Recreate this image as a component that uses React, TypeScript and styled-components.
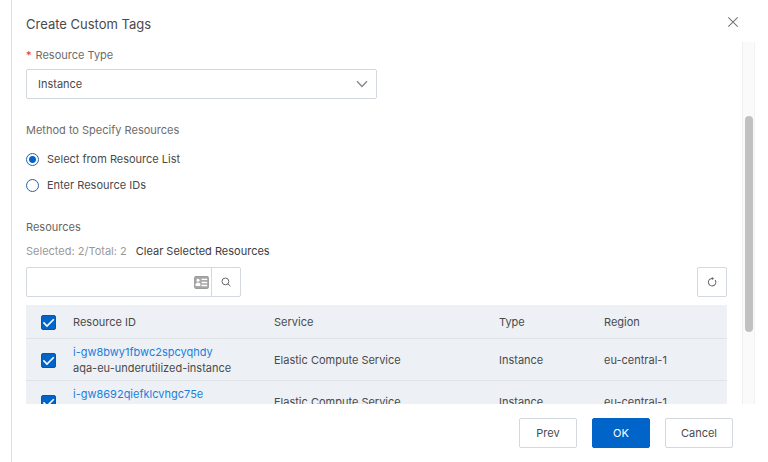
import React, { useState } from "react";
import styled, { createGlobalStyle } from "styled-components";

const GlobalStyle = createGlobalStyle`
  * { box-sizing: border-box; }
  body {
    margin: 0;
    background: #fff;
    color: #4a4a4a;
    font-family: Inter, "Liberation Sans", sans-serif;
    font-size: 11px;
    line-height: 16px;
  }
  button, input, select { font: inherit; color: inherit; }
`;

const border = "#d3d8de";
const blue = "#0064c8";

const Page = styled.div`
  height: 100vh;
  padding-left: 11px;
  display: flex;
`;

const Dialog = styled.section`
  flex: 1;
  min-width: 0;
  display: flex;
  flex-direction: column;
  border-left: 1px solid #dedfe0;
  padding-right: 13px;
`;

const Header = styled.header`
  height: 42px;
  flex: none;
  display: flex;
  align-items: center;
  justify-content: space-between;
  padding: 4px 16px 0 14px;
`;

const Title = styled.h1`
  margin: 0;
  padding-top: 2px;
  font-size: 13px;
  line-height: 20px;
  font-weight: 400;
`;

const CloseButton = styled.button`
  display: flex;
  padding: 0;
  margin-bottom: 3px;
  border: 0;
  background: none;
  color: #777;
`;

const Body = styled.div`
  flex: 1;
  min-height: 0;
  display: flex;
`;

const Form = styled.form`
  flex: 1;
  min-width: 0;
  overflow: hidden;
  padding: 5px 15px 0 14px;
`;

const Track = styled.div`
  width: 13px;
  display: flex;
  flex-direction: column;
  align-items: center;
  background: #fafafa;
  border-left: 1px solid #eee;
  border-right: 1px solid #f2f2f2;
  padding-top: 74px;
`;

const ThumbArea = styled.div`
  flex: 1;
  min-height: 0;
  display: flex;
`;

const Thumb = styled.div`
  width: 8px;
  height: 75%;
  border-radius: 4px;
  background: #c1c1c1;
`;

const Label = styled.label`
  display: block;
  color: #6c6c6c;
`;

const Required = styled.span`
  color: #e5352b;
  margin-right: 4px;
`;

const SelectBox = styled.div`
  position: relative;
  width: 50%;
  margin-top: 6px;
`;

const Select = styled.select`
  display: block;
  width: 100%;
  height: 30px;
  padding: 0 11px;
  appearance: none;
  background: #fff;
  border: 1px solid ${border};
  border-radius: 2px;
`;

const Chevron = styled.svg`
  position: absolute;
  right: 9px;
  top: 11px;
  pointer-events: none;
`;

const RadioGroup = styled.fieldset`
  margin: 23px 0 0;
  padding: 0;
  border: 0;
  min-width: 0;
`;

const Legend = styled.legend`
  padding: 0;
  margin-bottom: 13px;
  color: #6c6c6c;
`;

const RadioLabel = styled.label`
  display: flex;
  align-items: center;
  gap: 8px;
  height: 16px;
  margin-bottom: 10px;
`;

const Radio = styled.input`
  appearance: none;
  width: 13px;
  height: 13px;
  margin: 0;
  border: 1px solid #1f62b0;
  border-radius: 50%;
  background: #fff;
  &:checked {
    background: radial-gradient(circle, ${blue} 3px, #fff 4px);
  }
`;

const SectionTitle = styled.h2`
  margin: 16px 0 0;
  font-size: 11px;
  line-height: 16px;
  font-weight: 400;
  color: #666;
`;

const Summary = styled.div`
  display: flex;
  gap: 9px;
  margin-top: 8px;
  color: #999;
`;

const TextButton = styled.button`
  padding: 0;
  border: 0;
  background: none;
  color: #3c3c3c;
`;

const Tools = styled.div`
  display: flex;
  justify-content: space-between;
  margin: 8px 0;
`;

const SearchGroup = styled.div`
  display: flex;
  width: 215px;
  height: 30px;
  align-items: center;
  border: 1px solid ${border};
  border-radius: 2px;
`;

const SearchInput = styled.input`
  flex: 1;
  min-width: 0;
  height: 100%;
  border: 0;
  padding: 0 10px;
  outline: 0;
  background: none;
`;

const CardIcon = styled.svg`
  margin-right: 2px;
`;

const SearchButton = styled.button`
  width: 29px;
  height: 100%;
  display: flex;
  align-items: center;
  justify-content: center;
  padding: 0;
  border: 0;
  border-left: 1px solid ${border};
  background: none;
`;

const SquareButton = styled.button`
  width: 30px;
  height: 30px;
  display: flex;
  align-items: center;
  justify-content: center;
  padding: 0;
  border: 1px solid ${border};
  border-radius: 2px;
  background: #fff;
`;

const Table = styled.table`
  width: 100%;
  table-layout: fixed;
  border-collapse: separate;
  border-spacing: 0;
  background: #edf1f6;
`;

const HeadCell = styled.th<{ $width: string }>`
  width: ${(p) => p.$width};
  height: 34px;
  padding: 0;
  text-align: left;
  font-weight: 400;
  border-bottom: 1px solid #e0e4e6;
`;

const Cell = styled.td`
  height: 42px;
  padding: 0;
  border-bottom: 1px solid #e0e4e6;
`;

const ResourceLink = styled.a`
  display: block;
  color: #1b7fdc;
  text-decoration: none;
`;

const ResourceName = styled.div`
  min-height: 16px;
`;

const CheckHolder = styled.label`
  display: flex;
  padding: 2px 0 0 15px;
`;

const CheckStack = styled.span`
  display: grid;
`;

const Check = styled.input`
  appearance: none;
  width: 15px;
  height: 15px;
  margin: 0;
  border: 1px solid #0b56a4;
  border-radius: 2px;
  background: #fff;
  grid-area: 1 / 1;
  &:checked { background: ${blue}; }
`;

const Tick = styled.svg`
  grid-area: 1 / 1;
  z-index: 1;
  pointer-events: none;
`;

const Footer = styled.footer`
  flex: none;
  display: flex;
  justify-content: flex-end;
  gap: 15px;
  padding: 14px 22px 14px 14px;
`;

const ActionButton = styled.button<{ $primary?: boolean; $wide?: boolean }>`
  width: ${(p) => (p.$wide ? 68 : 58)}px;
  height: 30px;
  padding: 0;
  border: 1px solid ${(p) => (p.$primary ? blue : border)};
  border-radius: 2px;
  background: ${(p) => (p.$primary ? blue : "#fff")};
  color: ${(p) => (p.$primary ? "#fff" : "#4a4a4a")};
`;

const columns = [
  { name: "Resource ID", width: "auto" },
  { name: "Service", width: "225px" },
  { name: "Type", width: "105px" },
  { name: "Region", width: "123px" },
];

const resources = [
  { id: "i-gw8bwy1fbwc2spcyqhdy", name: "aqa-eu-underutilized-instance" },
  { id: "i-gw8692qiefklcvhgc75e", name: "" },
];

function CheckBox({ label, checked, onChange }: { label: string; checked: boolean; onChange: () => void }) {
  return (
    <CheckHolder>
      <CheckStack>
        <Check type="checkbox" aria-label={label} checked={checked} onChange={onChange} />
        {checked && (
          <Tick width="15" height="15" viewBox="0 0 15 15" fill="none" stroke="#fff" strokeWidth="1.6">
            <path d="M2.4 7.4 6 11 12.8 4.2" />
          </Tick>
        )}
      </CheckStack>
    </CheckHolder>
  );
}

export default function App() {
  const [method, setMethod] = useState("list");
  const [selected, setSelected] = useState<string[]>(resources.map((r) => r.id));
  const all = selected.length === resources.length;
  const toggle = (id: string) =>
    setSelected((s) => (s.includes(id) ? s.filter((x) => x !== id) : [...s, id]));

  return (
    <>
      <GlobalStyle />
      <Page>
        <Dialog role="dialog" aria-labelledby="title">
          <Header>
            <Title id="title">Create Custom Tags</Title>
            <CloseButton type="button" aria-label="Close">
              <svg width="12" height="12" viewBox="0 0 12 12" fill="none" stroke="currentColor" strokeWidth="1.1">
                <path d="M1.3 1.3 10.7 10.7M10.7 1.3 1.3 10.7" />
              </svg>
            </CloseButton>
          </Header>
          <Body>
            <Form>
              <Label htmlFor="type"><Required>*</Required>Resource Type</Label>
              <SelectBox>
                <Select id="type"><option>Instance</option></Select>
                <Chevron width="12" height="8" viewBox="0 0 12 8" fill="none" stroke="#888" strokeWidth="1.4">
                  <path d="M1 1.2 6 6.4 11 1.2" />
                </Chevron>
              </SelectBox>
              <RadioGroup>
                <Legend>Method to Specify Resources</Legend>
                <RadioLabel>
                  <Radio type="radio" name="method" checked={method === "list"} onChange={() => setMethod("list")} />
                  Select from Resource List
                </RadioLabel>
                <RadioLabel>
                  <Radio type="radio" name="method" checked={method === "ids"} onChange={() => setMethod("ids")} />
                  Enter Resource IDs
                </RadioLabel>
              </RadioGroup>
              <SectionTitle>Resources</SectionTitle>
              <Summary>
                <span>Selected: {selected.length}/Total: {resources.length}</span>
                <TextButton type="button" onClick={() => setSelected([])}>Clear Selected Resources</TextButton>
              </Summary>
              <Tools>
                <SearchGroup>
                  <SearchInput type="text" aria-label="Search resources" />
                  <CardIcon width="15" height="13" viewBox="0 0 15 13">
                    <rect x="0.7" y="0.7" width="13.6" height="11.6" rx="1.2" fill="#aaa" stroke="#9b9b9b" strokeWidth="1.2" />
                    <circle cx="4" cy="4.3" r="1.5" fill="#fff" />
                    <path d="M1.6 10V8.3Q2 6.6 4 6.6T6.3 8.3V10Z" fill="#fff" />
                    <path d="M7.6 3.4h5.6M7.6 6.5h5.6M7.6 9.5h5.6" stroke="#fff" strokeWidth="1.3" />
                  </CardIcon>
                  <SearchButton type="button" aria-label="Search">
                    <svg width="10" height="10" viewBox="0 0 10 10" fill="none" stroke="#666" strokeWidth="1">
                      <circle cx="4.4" cy="4.4" r="3.4" />
                      <path d="M6.9 6.9 9.4 9.2" />
                    </svg>
                  </SearchButton>
                </SearchGroup>
                <SquareButton type="button" aria-label="Refresh">
                  <svg width="10" height="10" viewBox="0 0 10 10" fill="none" stroke="#666" strokeWidth="1.1">
                    <path d="M8.2 3.1A3.7 3.7 0 1 1 3 2.1Q4 1.4 5.6 1.5" />
                    <path d="M4.8 .1 7.2 1.6 5 3.1Z" fill="#666" stroke="none" />
                  </svg>
                </SquareButton>
              </Tools>
              <Table>
                <thead>
                  <tr>
                    <HeadCell $width="47px">
                      <CheckBox label="Select all" checked={all} onChange={() => setSelected(all ? [] : resources.map((r) => r.id))} />
                    </HeadCell>
                    {columns.map((c) => <HeadCell key={c.name} $width={c.width}>{c.name}</HeadCell>)}
                  </tr>
                </thead>
                <tbody>
                  {resources.map((r) => (
                    <tr key={r.id}>
                      <Cell><CheckBox label={r.id} checked={selected.includes(r.id)} onChange={() => toggle(r.id)} /></Cell>
                      <Cell>
                        <ResourceLink href={"#" + r.id}>{r.id}</ResourceLink>
                        <ResourceName>{r.name}</ResourceName>
                      </Cell>
                      <Cell>Elastic Compute Service</Cell>
                      <Cell>Instance</Cell>
                      <Cell>eu-central-1</Cell>
                    </tr>
                  ))}
                </tbody>
              </Table>
            </Form>
            <Track aria-hidden="true">
              <ThumbArea><Thumb /></ThumbArea>
            </Track>
          </Body>
          <Footer>
            <ActionButton type="button">Prev</ActionButton>
            <ActionButton type="button" $primary>OK</ActionButton>
            <ActionButton type="button" $wide>Cancel</ActionButton>
          </Footer>
        </Dialog>
      </Page>
    </>
  );
}
